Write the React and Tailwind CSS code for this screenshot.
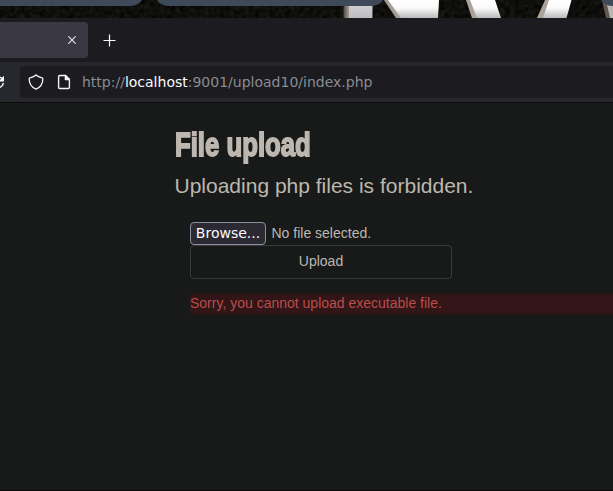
function Wallpaper() {
  return (
    <svg className="block h-[18px] w-full shrink-0" viewBox="0 0 613 18" preserveAspectRatio="none">
      <defs>
        <filter id="grain" x="0" y="0" width="100%" height="100%" colorInterpolationFilters="sRGB">
          <feTurbulence type="fractalNoise" baseFrequency="0.2" numOctaves="3" seed="4" />
          <feColorMatrix values="0.13 0 0 0 -0.008  0.13 0 0 0 -0.01  0.13 0 0 0 -0.02  0 0 0 0 1" />
        </filter>
        <linearGradient id="letter" x1="0" y1="0" x2="0" y2="1">
          <stop offset="0" stopColor="#ffffff" />
          <stop offset="0.45" stopColor="#fafafa" />
          <stop offset="1" stopColor="#b9b9b9" />
        </linearGradient>
        <linearGradient id="stem" x1="0" y1="0" x2="0" y2="1">
          <stop offset="0.3" stopColor="#cfcfd1" />
          <stop offset="1" stopColor="#bcbcbe" />
        </linearGradient>
        <linearGradient id="edge" x1="0" y1="0" x2="1" y2="0">
          <stop offset="0" stopColor="#4e483f" />
          <stop offset="1" stopColor="#b5aea5" />
        </linearGradient>
      </defs>
      <rect width="613" height="18" fill="#0d0d0b" />
      <rect width="613" height="18" filter="url(#grain)" />
      <path d="M343.5 0H350V18H343.5Z" fill="url(#edge)" />
      <path d="M349 0H372.5V18H349Z" fill="url(#stem)" />
      <path d="M384 0H391L402 18H396Z" fill="#a39d94" />
      <path d="M388 0H439L438 18H401Z" fill="url(#letter)" />
      <path d="M466 0H472L478 18H472Z" fill="#aaa39a" />
      <path d="M470 0H495L501 18H477Z" fill="url(#letter)" />
      <path d="M545 0H550L545 18H537Z" fill="#aaa39a" />
      <path d="M549 0H571.5L566.5 18H543Z" fill="url(#letter)" />
      <path d="M602 0H607L611 18H606Z" fill="#5f584f" />
      <path d="M606 0H613V18H610Z" fill="#b9b6b1" />
      <path d="M0 0H142Q138 6 129 6H0Z" fill="#3e4a5a" />
      <path d="M157 0H383Q379 6 370 6H170Q161 6 157 0Z" fill="#3e4a5a" />
      <path d="M601 0H613V6Q605 6 601 0Z" fill="#3e4a5a" />
    </svg>
  );
}

function TabStrip() {
  return (
    <div className="flex h-11 shrink-0 items-start bg-[#1c1b20] pt-1">
      <div className="flex h-9 w-[88px] items-center justify-end rounded-r bg-[#3a3842] pr-3">
        <svg className="size-2" viewBox="0 0 8 8" fill="none" stroke="#e4e4e8" strokeWidth="1.1">
          <path d="M0.3 0.3L7.7 7.7M7.7 0.3L0.3 7.7" />
        </svg>
      </div>
      <svg className="mt-3 ml-[15px] size-3.5" viewBox="0 0 14 14" stroke="#fbfbfe" strokeWidth="1.2">
        <path d="M6.5 0.5V12.5M0.5 6.5H12.5" />
      </svg>
    </div>
  );
}

function Toolbar() {
  return (
    <div className="flex h-10 shrink-0 items-center bg-[#27282d]">
      <svg className="h-4 w-5 shrink-0" viewBox="0 0 20 16" fill="none">
        <path d="M4 1.8V7.4H-1.6Z" fill="#fbfbfe" />
        <path d="M-1 2.6L2 4.4M3.5 9Q2.6 12.6 -1 13.9" stroke="#fbfbfe" strokeWidth="1.4" />
      </svg>
      <div className="flex h-8 flex-1 items-center rounded-l bg-[#1c1b20] pl-2">
        <svg className="size-4" viewBox="0 0 16 16" fill="none" stroke="#f5f5f8" strokeWidth="1.3" strokeLinejoin="round">
          <path d="M8 0.9C6.5 2.3 4 3.3 2 3.8Q1.2 4 1.2 4.8C1.1 9.6 3.6 13.4 8 15.2C12.4 13.4 14.9 9.6 14.8 4.8Q14.8 4 14 3.8C12 3.3 9.5 2.3 8 0.9Z" />
        </svg>
        <svg className="ml-3 size-4" viewBox="0 0 16 16" fill="none" stroke="#f5f5f8" strokeWidth="1.4" strokeLinejoin="round">
          <path d="M9.4 1.5H3.8Q2.6 1.5 2.6 2.7V13.3Q2.6 14.5 3.8 14.5H12.2Q13.4 14.5 13.4 13.3V5.5Z" />
          <path d="M9.4 1.5V5.5H13.4Z" fill="#f5f5f8" />
        </svg>
        <p className="ml-2.5 font-['DejaVu_Sans',sans-serif] text-[14px] leading-5 whitespace-nowrap text-[#8b8b91]">
          http://<span className="text-[#fbfbfe]">localhost</span>:9001/upload10/index.php
        </p>
      </div>
    </div>
  );
}

function Page() {
  return (
    <main className="flex-1 border-y border-[#090a09] bg-[#181a19] pt-[22px] pl-[174.5px] text-[#bdb7af]">
      <h1 className="h-[38px] w-fit origin-left scale-x-[0.757] text-[34px] leading-[38px] font-bold whitespace-nowrap [-webkit-text-stroke:1.8px_#bdb7af]">
        File upload
      </h1>
      <p className="mt-2 text-[21px] leading-[30px] whitespace-nowrap">Uploading php files is forbidden.</p>
      <form className="mt-[21px] ml-[15.5px]">
        <div className="flex h-[23px] items-center gap-[5.5px]">
          <button
            type="button"
            className="flex h-[23px] w-[76px] items-start justify-center rounded-[4px] border border-[#8f8f9d] bg-[#2b2a33] font-['DejaVu_Sans',sans-serif] text-[14px] leading-5 whitespace-nowrap text-[#fbfbfe]"
          >
            Browse...
          </button>
          <span className="pb-0.5 text-[14px] leading-5">No file selected.</span>
        </div>
        <button type="button" className="block h-[34px] w-[262px] rounded-[4px] border border-[#373c3e] pb-0.5 text-[14px] leading-5">
          Upload
        </button>
        <div className="mt-[15px] h-5 bg-[#311517] text-[14px] leading-[18px] text-[#b84e4b]">
          Sorry, you cannot upload executable file.
        </div>
      </form>
    </main>
  );
}

export default function App() {
  return (
    <div className="flex h-[491px] w-full flex-col overflow-hidden bg-[#181a19] font-['Liberation_Sans',Arial,sans-serif]">
      <Wallpaper />
      <TabStrip />
      <Toolbar />
      <Page />
    </div>
  );
}
